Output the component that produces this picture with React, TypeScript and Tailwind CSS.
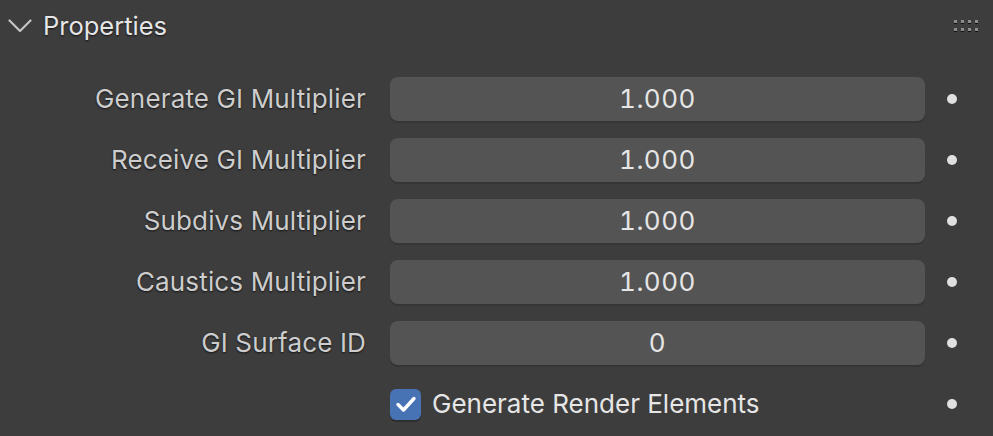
import React from "react";

const rows = [
  { label: "Generate GI Multiplier", value: "1.000" },
  { label: "Receive GI Multiplier", value: "1.000" },
  { label: "Subdivs Multiplier", value: "1.000" },
  { label: "Caustics Multiplier", value: "1.000" },
  { label: "GI Surface ID", value: "0" },
];

function Dot() {
  return <div className="ml-[22px] w-[10px] h-[10px] rounded-full bg-[#e0e0e0]" />;
}

export default function App() {
  return (
    <div
      className="w-[993px] h-[436px] bg-[#3d3d3d] overflow-hidden relative"
      style={{ fontFamily: "Inter, 'Noto Sans', sans-serif" }}
    >
      <div className="h-[52px] flex items-center">
        <svg width="24" height="14" viewBox="0 0 24 14" className="ml-[8px]">
          <path d="M1.5 1.5 L12 12 L22.5 1.5" fill="none" stroke="#c4c4c4" strokeWidth="2.2" strokeLinecap="round" strokeLinejoin="round" />
        </svg>
        <span className="ml-[11px] text-[25.5px] text-[#e6e6e6] [text-shadow:0_1px_2px_rgba(0,0,0,0.7)] leading-none">
          Properties
        </span>
        <div className="ml-auto mr-[15px] grid grid-cols-4 gap-x-[4px] gap-y-[4px]">
          {Array.from({ length: 8 }).map((_, i) => (
            <div key={i} className="w-[3px] h-[4px] flex flex-col">
              <div className="h-[3px] bg-[#8c8c8c]" />
              <div className="h-[1px] bg-[#111]" />
            </div>
          ))}
        </div>
      </div>
      <div className="pt-[25px] flex flex-col gap-[17px]">
        {rows.map((r) => (
          <div key={r.label} className="flex items-center h-[44px]">
            <div className="w-[390px] pr-[24px] text-right text-[26px] tracking-[0.15px] text-[#cdcdcd] [text-shadow:0_1px_2px_rgba(0,0,0,0.7)] leading-none">
              {r.label}
            </div>
            <div className="w-[535px] h-[44px] rounded-[8px] bg-[#545454] shadow-[0_2px_0_#353535] flex items-center justify-center text-[26px] tracking-[0.5px] [font-feature-settings:'tnum'] text-[#e6e6e6] leading-none">
              {r.value}
            </div>
            <Dot />
          </div>
        ))}
        <div className="flex items-center h-[44px]">
          <div className="w-[390px]" />
          <div className="w-[31px] h-[31px] rounded-[6px] bg-[#4772b3] shadow-[0_2px_0_#2e2e2e] flex items-center justify-center">
            <svg width="22" height="18" viewBox="0 0 22 18">
              <path d="M3 9.5 L8.5 15 L19 3.5" fill="none" stroke="#ffffff" strokeWidth="3.4" strokeLinecap="round" strokeLinejoin="round" />
            </svg>
          </div>
          <span className="ml-[11px] text-[26px] text-[#e6e6e6] leading-none w-[493px]">
            Generate Render Elements
          </span>
          <Dot />
        </div>
      </div>
    </div>
  );
}
